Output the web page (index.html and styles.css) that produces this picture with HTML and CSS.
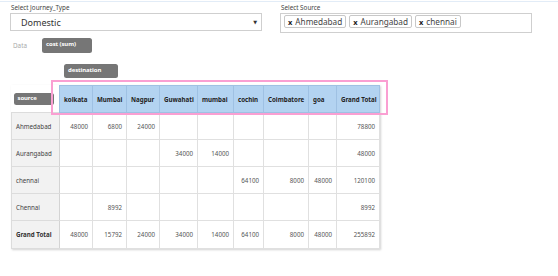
FILE: index.html
```html
<!DOCTYPE html>
<html>
<head>
<meta charset="utf-8">
<link rel="stylesheet" href="styles.css">
</head>
<body>
<div class="topline"></div>
<div class="filters">
  <div class="field journey">
    <div class="label">Select Journey_Type</div>
    <div class="select"><span>Domestic</span><span class="arrow">▼</span></div>
  </div>
  <div class="field source">
    <div class="label">Select Source</div>
    <div class="multi">
      <span class="tag"><b>x</b> Ahmedabad</span>
      <span class="tag"><b>x</b> Aurangabad</span>
      <span class="tag"><b>x</b> chennai</span>
    </div>
  </div>
</div>
<div class="datarow">
  <span class="datalbl">Data</span>
  <span class="chip chip-cost">cost (sum)</span>
</div>
<div class="destrow">
  <span class="chip chip-dest">destination</span>
</div>
<div class="pivotwrap">
  <table class="pivot">
    <thead>
      <tr>
        <th class="corner"><span class="chip chip-src">source</span></th>
        <th class="c1">kolkata</th>
        <th class="c2">Mumbai</th>
        <th class="c3">Nagpur</th>
        <th class="c4">Guwahati</th>
        <th class="c5">mumbai</th>
        <th class="c6">cochin</th>
        <th class="c7">Coimbatore</th>
        <th class="c8">goa</th>
        <th class="c9">Grand Total</th>
      </tr>
    </thead>
    <tbody>
      <tr><th>Ahmedabad</th><td>48000</td><td>6800</td><td>24000</td><td></td><td></td><td></td><td></td><td></td><td>78800</td></tr>
      <tr><th>Aurangabad</th><td></td><td></td><td></td><td>34000</td><td>14000</td><td></td><td></td><td></td><td>48000</td></tr>
      <tr><th>chennai</th><td></td><td></td><td></td><td></td><td></td><td>64100</td><td>8000</td><td>48000</td><td>120100</td></tr>
      <tr><th>Chennai</th><td></td><td>8992</td><td></td><td></td><td></td><td></td><td></td><td></td><td>8992</td></tr>
      <tr class="total"><th>Grand Total</th><td>48000</td><td>15792</td><td>24000</td><td>34000</td><td>14000</td><td>64100</td><td>8000</td><td>48000</td><td>255892</td></tr>
    </tbody>
  </table>
  <div class="highlight"></div>
</div>
</body>
</html>
```

FILE: styles.css
```css
* { box-sizing: border-box; }
html, body { margin: 0; padding: 0; background: #fff; }
body {
  font-family: "Noto Sans", "DejaVu Sans", sans-serif;
  color: #333;
  width: 558px;
  height: 276px;
  overflow: hidden;
}
.topline {
  height: 1px;
  margin-top: 1px;
  background: #e2ecf7;
}
.filters {
  display: flex;
  gap: 18px;
  padding-left: 10px;
  margin-top: 2px;
}
.field { width: 252px; }
.label {
  font-size: 6.3px;
  line-height: 8px;
  color: #444;
  padding-left: 1px;
  height: 9px;
}
.select {
  height: 18px;
  border: 1px solid #cfcfcf;
  display: flex;
  align-items: center;
  justify-content: space-between;
  padding: 0 4px 0 10px;
  font-size: 9px;
  color: #333;
}
.select .arrow { font-size: 5px; color: #333; }
.multi {
  height: 20px;
  border: 1px solid #cfcfcf;
  display: flex;
  align-items: flex-start;
  gap: 3px;
  padding: 1px 3px;
}
.tag {
  display: inline-flex;
  align-items: center;
  height: 13px;
  border: 1px solid #c8c8c8;
  border-radius: 2px;
  padding: 0 3px;
  font-size: 8.2px;
  color: #444;
  background: #fff;
}
.tag b { font-weight: bold; margin-right: 3px; font-size: 7.5px; color: #222; }

.chip {
  display: inline-flex;
  align-items: center;
  background: #767676;
  color: #fff;
  font-weight: bold;
  font-size: 6px;
  border-radius: 2.5px;
  padding: 0 4px;
  letter-spacing: -0.1px;
}
.datarow {
  display: flex;
  align-items: center;
  margin-top: 5px;
  padding-left: 13px;
  height: 15px;
}
.datalbl { font-size: 6.3px; color: #aaa; width: 29px; }
.chip-cost { width: 50px; height: 15px; padding-bottom: 4px; }
.destrow {
  margin-top: 11px;
  padding-left: 64px;
  height: 14px;
  display: flex;
}
.chip-dest { width: 54px; height: 14px; padding-bottom: 2px; }
.chip-src { width: 40px; height: 12px; padding-bottom: 3px; }

.pivotwrap {
  position: relative;
  margin-top: 7px;
  margin-left: 11px;
  width: 368px;
}
.pivot {
  border-collapse: collapse;
  table-layout: fixed;
  width: 368px;
  font-size: 6.2px;
  box-shadow: 1px 1px 2px rgba(0,0,0,0.18);
}
.pivot th, .pivot td {
  padding: 0 4px;
  height: 27px;
  border: 1px solid #e0e0e0;
  white-space: nowrap;
  overflow: hidden;
}
.pivot thead th {
  background: #b3d3f1;
  color: #222;
  font-weight: bold;
  text-align: left;
  border-color: #9fc1e3;
  height: 27px;
}
.pivot thead th.corner {
  background: #fff;
  border: none;
  width: 48px;
  padding: 0 0 0 2px;
  vertical-align: middle;
}
.c1 { width: 33px; }
.c2 { width: 34px; }
.c3 { width: 33px; }
.c4 { width: 38px; }
.c5 { width: 36px; }
.c6 { width: 30px; }
.c7 { width: 45px; }
.c8 { width: 28px; }
.c9 { width: 43px; }
.pivot tbody th {
  background: #f2f2f2;
  font-weight: normal;
  text-align: left;
  color: #444;
  border-color: #dcdcdc;
  border-right: 1px solid #d4d4d4;
}
.pivot tbody td {
  text-align: right;
  color: #555;
  background: #fff;
}
.pivot tr.total th { font-weight: bold; color: #333; }
.pivot tr.total td { height: 28px; }
.highlight {
  position: absolute;
  left: 40px;
  top: -5px;
  width: 337px;
  height: 35px;
  border: 2px solid #fa9fd2;
  pointer-events: none;
}
```
